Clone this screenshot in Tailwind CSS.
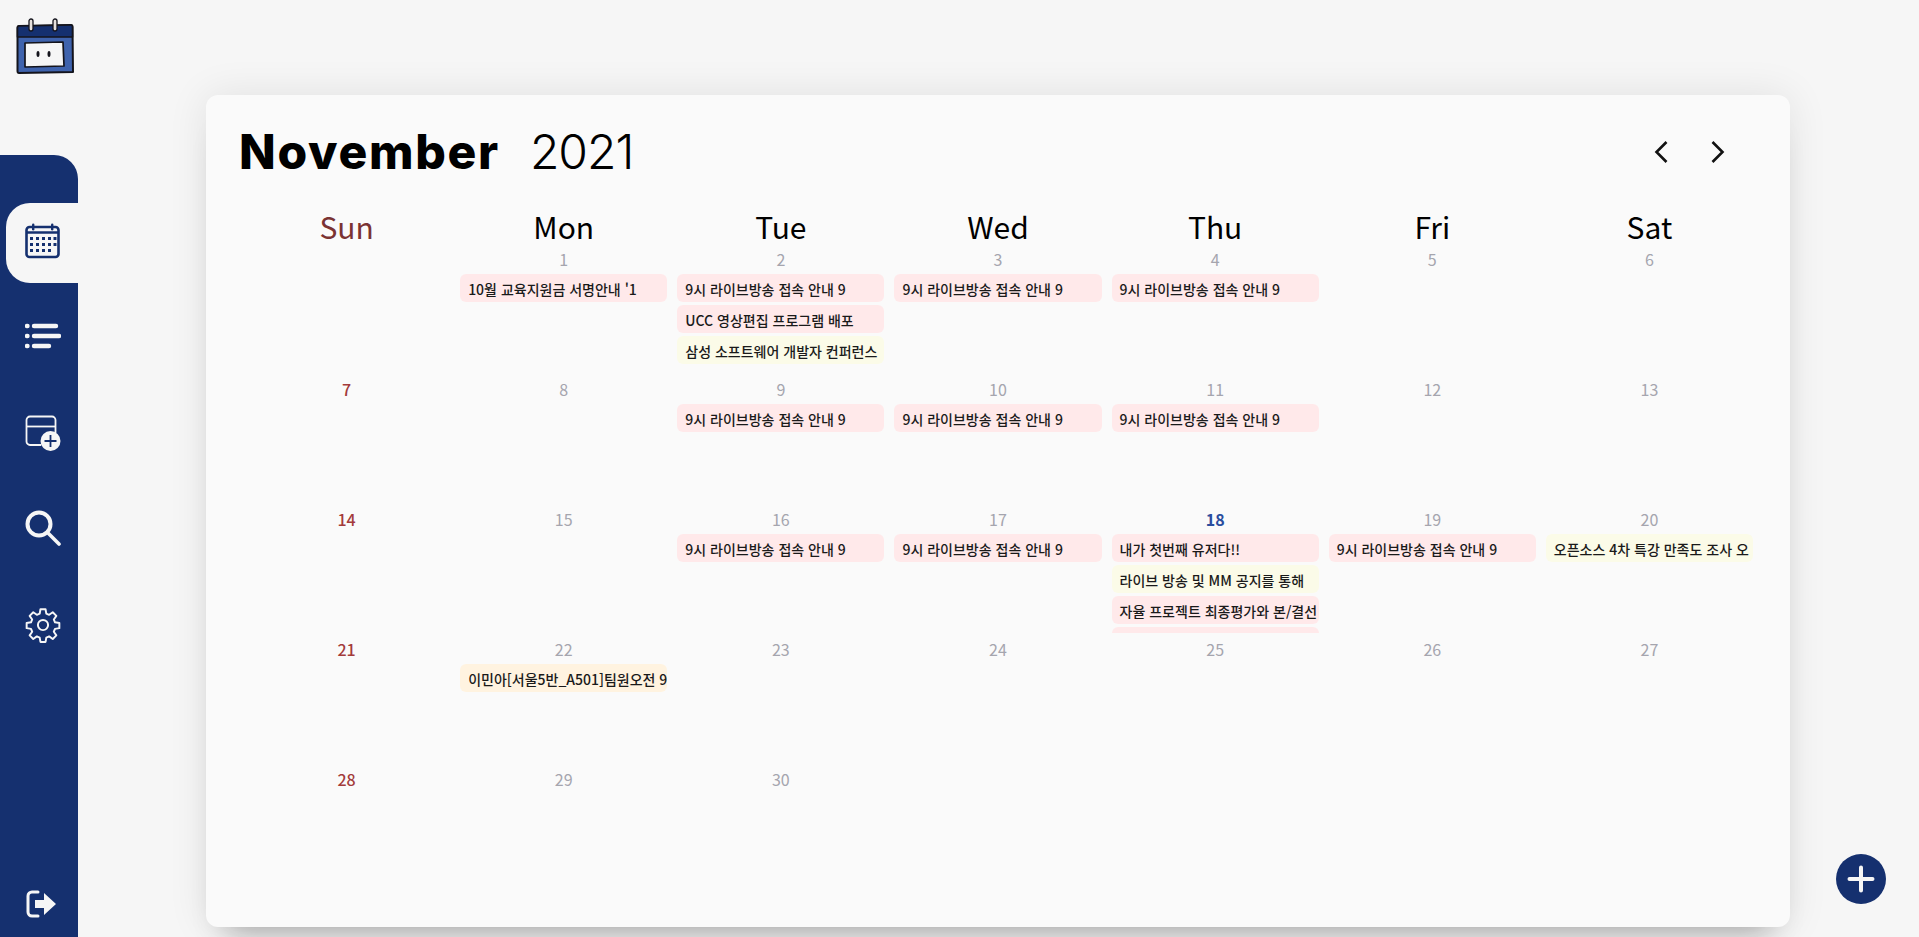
<!DOCTYPE html>
<html lang="ko">
  <head>
    <meta charset="UTF-8" />
    <meta name="viewport" content="width=device-width, initial-scale=1.0" />
    <title>Calendar</title>
    <script src="https://cdn.jsdelivr.net/npm/@tailwindcss/browser@4"></script>
  </head>
  <body class="bg-[#f6f6f6] text-black antialiased font-['Noto_Sans_CJK_KR','Noto_Sans',sans-serif]">
    <div class="relative flex h-[937px] overflow-hidden">
      <!-- SIDEBAR -->
      <aside class="flex w-[78px] shrink-0 flex-col">
        <div class="h-[155px] pl-[16px] pt-[17px]">
          <svg width="58" height="58" viewBox="0 0 58 58">
            <path d="M3 9 L55 8 Q56.500 8 56.500 10 L57 55 L3 56 Q1.500 56 1.500 54 L1.500 11 Q1.500 9 3 9 Z" fill="#3f63ad" stroke="#14141c" stroke-width="2" stroke-linejoin="round"/>
            <path d="M3 9 L55 8 Q56.500 8 56.500 10 L56.500 20 L1.500 20 L1.500 11 Q1.500 9 3 9 Z" fill="#15306f" stroke="#14141c" stroke-width="1.600" stroke-linejoin="round"/>
            <rect x="13" y="2" width="4" height="12" rx="2" fill="#e6e0dc" stroke="#14141c" stroke-width="1.300"/>
            <rect x="37" y="2" width="4" height="12" rx="2" fill="#e6e0dc" stroke="#14141c" stroke-width="1.300"/>
            <path d="M9 26 L47 25 L48 49 L9 50 Z" fill="#f6f6f6" stroke="#14141c" stroke-width="1.700" stroke-linejoin="round"/>
            <ellipse cx="22" cy="37" rx="1.500" ry="3" fill="#14141c"/>
            <ellipse cx="33" cy="37" rx="1.500" ry="3" fill="#14141c"/>
          </svg>
        </div>
        <nav class="flex flex-1 flex-col rounded-tr-[24px] bg-[#15306f] pl-[6px] pt-[48px] text-[#f6f6f6]">
          <a class="flex h-[80px] items-start rounded-l-[24px] bg-[#f6f6f6] pl-[19px] pt-[20px] text-[#15306f]">
            <svg width="36" height="36" viewBox="0 0 36 36" fill="currentColor">
              <rect x="1.500" y="4" width="32" height="30" rx="3" fill="none" stroke="currentColor" stroke-width="2.600"/>
              <path d="M1.500 9.500h32" stroke="currentColor" stroke-width="2.600"/>
              <rect x="7" y="0.500" width="2.400" height="7" rx="1.200"/>
              <rect x="26" y="0.500" width="2.400" height="7" rx="1.200"/>
              <path d="M5 14h3v3H5zM11 14h3v3h-3zM17 14h3v3h-3zM23 14h3v3h-3zM28.500 14h3v3h-3zM5 20h3v3H5zM11 20h3v3h-3zM17 20h3v3h-3zM23 20h3v3h-3zM28.500 20h3v3h-3zM5 26h3v3H5zM11 26h3v3h-3zM17 26h3v3h-3zM23 26h3v3h-3z"/>
            </svg>
          </a>
          <a class="mt-[40px] flex h-[60px] pl-[19px]">
            <svg width="36" height="30" viewBox="0 0 36 30" fill="none" stroke="currentColor" stroke-linecap="round">
              <path d="M2 3h.5M9 3h22M2 13h.5M9 13h25M2 23h.5M9 23h15" stroke-width="4.400"/>
            </svg>
          </a>
          <a class="mt-[32px] flex h-[60px] pl-[19px]">
            <svg width="36" height="36" viewBox="0 0 36 36" fill="none" stroke="currentColor">
              <path d="M16 30H5a3.500 3.500 0 0 1-3.500-3.500V5A3.500 3.500 0 0 1 5 1.500h22A3.500 3.500 0 0 1 30.500 5v13" stroke-width="1.800"/>
              <path d="M1.500 11.500h29" stroke-width="1.800"/>
              <circle cx="25.500" cy="26" r="10" fill="currentColor" stroke="none"/>
              <path d="M25.500 20v12M19.500 26h12" stroke="#15306f" stroke-width="1.800"/>
            </svg>
          </a>
          <a class="mt-[35px] flex h-[63px] pl-[19px]">
            <svg width="36" height="36" viewBox="0 0 36 36" fill="none" stroke="currentColor" stroke-width="4">
              <circle cx="14" cy="14" r="11.500"/>
              <path d="M22.500 22.500L34 34" stroke-width="3.600" stroke-linecap="round"/>
            </svg>
          </a>
          <a class="mt-[34px] flex h-[36px] pl-[19px]">
            <svg width="36" height="36" viewBox="0 0 24 24" fill="none" stroke="currentColor" stroke-width="1.300" stroke-linejoin="round">
              <path d="M10.300 1.500h3.400l.5 2.900 1.900.8 2.400-1.700 2.400 2.400-1.700 2.400.8 1.900 2.900.5v3.400l-2.900.5-.8 1.900 1.700 2.400-2.400 2.400-2.400-1.700-1.900.8-.5 2.900h-3.400l-.5-2.900-1.900-.8-2.400 1.700-2.400-2.400 1.700-2.400-.8-1.900-2.900-.5v-3.400l2.900-.5.8-1.900-1.700-2.400 2.400-2.400 2.400 1.700 1.900-.8z"/>
              <circle cx="12" cy="12" r="3.400"/>
            </svg>
          </a>
          <a class="mt-auto mb-[19px] flex pl-[20px]">
            <svg width="31" height="28" viewBox="0 0 31 28" fill="currentColor">
              <path d="M12 2H6a4 4 0 0 0-4 4v16a4 4 0 0 0 4 4h6" fill="none" stroke="currentColor" stroke-width="3" stroke-linecap="round"/>
              <path d="M9 10h9V3l12 11-12 11v-7H9z"/>
            </svg>
          </a>
        </nav>
      </aside>

      <!-- CALENDAR CARD -->
      <main class="ml-[128px] mt-[95px] h-[832px] w-[1584px] shrink-0 rounded-[12px] bg-[#fafafa] px-[32px] shadow-[0_0_40px_rgba(0,0,0,0.09),0_25px_30px_-20px_rgba(0,0,0,0.3)]">
        <header class="flex h-[112px] items-center justify-between pt-[1px]">
          <h1 class="flex items-baseline gap-[30px] pl-[1px] text-[48px] leading-none font-['Inter',sans-serif]">
            <span class="font-extrabold tracking-[1.700px]">November</span>
            <span class="font-light tracking-[-1px]">2021</span>
          </h1>
          <div class="mr-[33px] flex gap-[43px]">
            <svg width="14" height="24" viewBox="0 0 14 24" fill="none" stroke="#111" stroke-width="2.600"><path d="M12.500 2 2.500 12l10 10"/></svg>
            <svg width="14" height="24" viewBox="0 0 14 24" fill="none" stroke="#111" stroke-width="2.600"><path d="M1.500 2l10 10-10 10"/></svg>
          </div>
        </header>
        <div class="grid grid-cols-7 text-center text-[30px] leading-[38px] font-normal">
          <div class="text-[#7a3333]">Sun</div><div>Mon</div><div>Tue</div><div>Wed</div><div>Thu</div><div>Fri</div><div>Sat</div>
        </div>
        <div class="mt-[2px] grid grid-cols-7 grid-rows-[repeat(5,130px)] text-center text-[16px] leading-[24px] text-[#a5a5ae]">
          <div></div>
          <div class="h-[126px] overflow-hidden"><div>1</div>
            <p class="mx-[5px] mb-[1px] mt-[3px] h-[28px] overflow-hidden whitespace-nowrap rounded-[6px] bg-[#ffe9ea] pl-[8px] text-left text-[14px] leading-[30px] font-medium text-[#1a1a1a]">10월 교육지원금 서명안내 '1</p></div>
          <div class="h-[126px] overflow-hidden"><div>2</div>
            <p class="mx-[5px] mb-[1px] mt-[3px] h-[28px] overflow-hidden whitespace-nowrap rounded-[6px] bg-[#ffe9ea] pl-[8px] text-left text-[14px] leading-[30px] font-medium text-[#1a1a1a]">9시 라이브방송 접속 안내 9</p>
            <p class="mx-[5px] mb-[1px] mt-[3px] h-[28px] overflow-hidden whitespace-nowrap rounded-[6px] bg-[#ffe9ea] pl-[8px] text-left text-[14px] leading-[30px] font-medium text-[#1a1a1a]">UCC 영상편집 프로그램 배포</p>
            <p class="mx-[5px] mb-[1px] mt-[3px] h-[28px] overflow-hidden whitespace-nowrap rounded-[6px] bg-[#fbfbe8] pl-[8px] text-left text-[14px] leading-[30px] font-medium text-[#1a1a1a]">삼성 소프트웨어 개발자 컨퍼런스</p></div>
          <div class="h-[126px] overflow-hidden"><div>3</div>
            <p class="mx-[5px] mb-[1px] mt-[3px] h-[28px] overflow-hidden whitespace-nowrap rounded-[6px] bg-[#ffe9ea] pl-[8px] text-left text-[14px] leading-[30px] font-medium text-[#1a1a1a]">9시 라이브방송 접속 안내 9</p></div>
          <div class="h-[126px] overflow-hidden"><div>4</div>
            <p class="mx-[5px] mb-[1px] mt-[3px] h-[28px] overflow-hidden whitespace-nowrap rounded-[6px] bg-[#ffe9ea] pl-[8px] text-left text-[14px] leading-[30px] font-medium text-[#1a1a1a]">9시 라이브방송 접속 안내 9</p></div>
          <div>5</div>
          <div>6</div>

          <div class="font-medium text-[#a33b3b]">7</div>
          <div>8</div>
          <div class="h-[126px] overflow-hidden"><div>9</div>
            <p class="mx-[5px] mb-[1px] mt-[3px] h-[28px] overflow-hidden whitespace-nowrap rounded-[6px] bg-[#ffe9ea] pl-[8px] text-left text-[14px] leading-[30px] font-medium text-[#1a1a1a]">9시 라이브방송 접속 안내 9</p></div>
          <div class="h-[126px] overflow-hidden"><div>10</div>
            <p class="mx-[5px] mb-[1px] mt-[3px] h-[28px] overflow-hidden whitespace-nowrap rounded-[6px] bg-[#ffe9ea] pl-[8px] text-left text-[14px] leading-[30px] font-medium text-[#1a1a1a]">9시 라이브방송 접속 안내 9</p></div>
          <div class="h-[126px] overflow-hidden"><div>11</div>
            <p class="mx-[5px] mb-[1px] mt-[3px] h-[28px] overflow-hidden whitespace-nowrap rounded-[6px] bg-[#ffe9ea] pl-[8px] text-left text-[14px] leading-[30px] font-medium text-[#1a1a1a]">9시 라이브방송 접속 안내 9</p></div>
          <div>12</div>
          <div>13</div>

          <div class="font-medium text-[#a33b3b]">14</div>
          <div>15</div>
          <div class="h-[126px] overflow-hidden"><div>16</div>
            <p class="mx-[5px] mb-[1px] mt-[3px] h-[28px] overflow-hidden whitespace-nowrap rounded-[6px] bg-[#ffe9ea] pl-[8px] text-left text-[14px] leading-[30px] font-medium text-[#1a1a1a]">9시 라이브방송 접속 안내 9</p></div>
          <div class="h-[126px] overflow-hidden"><div>17</div>
            <p class="mx-[5px] mb-[1px] mt-[3px] h-[28px] overflow-hidden whitespace-nowrap rounded-[6px] bg-[#ffe9ea] pl-[8px] text-left text-[14px] leading-[30px] font-medium text-[#1a1a1a]">9시 라이브방송 접속 안내 9</p></div>
          <div class="h-[126px] overflow-hidden"><div class="font-bold text-[#2a4d9e]">18</div>
            <p class="mx-[5px] mb-[1px] mt-[3px] h-[28px] overflow-hidden whitespace-nowrap rounded-[6px] bg-[#ffe9ea] pl-[8px] text-left text-[14px] leading-[30px] font-medium text-[#1a1a1a]">내가 첫번째 유저다!!</p>
            <p class="mx-[5px] mb-[1px] mt-[3px] h-[28px] overflow-hidden whitespace-nowrap rounded-[6px] bg-[#fbfbe8] pl-[8px] text-left text-[14px] leading-[30px] font-medium text-[#1a1a1a]">라이브 방송 및 MM 공지를 통해</p>
            <p class="mx-[5px] mb-[1px] mt-[3px] h-[28px] overflow-hidden whitespace-nowrap rounded-[6px] bg-[#ffe9ea] pl-[8px] text-left text-[14px] leading-[30px] font-medium text-[#1a1a1a]">자율 프로젝트 최종평가와 본/결선</p>
            <p class="mx-[5px] mb-[1px] mt-[3px] h-[28px] rounded-[6px] bg-[#ffe9ea]"></p></div>
          <div class="h-[126px] overflow-hidden"><div>19</div>
            <p class="mx-[5px] mb-[1px] mt-[3px] h-[28px] overflow-hidden whitespace-nowrap rounded-[6px] bg-[#ffe9ea] pl-[8px] text-left text-[14px] leading-[30px] font-medium text-[#1a1a1a]">9시 라이브방송 접속 안내 9</p></div>
          <div class="h-[126px] overflow-hidden"><div>20</div>
            <p class="mx-[5px] mb-[1px] mt-[3px] h-[28px] overflow-hidden whitespace-nowrap rounded-[6px] bg-[#fbfbe8] pl-[8px] text-left text-[14px] leading-[30px] font-medium text-[#1a1a1a]">오픈소스 4차 특강 만족도 조사 오</p></div>

          <div class="font-medium text-[#a33b3b]">21</div>
          <div class="h-[126px] overflow-hidden"><div>22</div>
            <p class="mx-[5px] mb-[1px] mt-[3px] h-[28px] overflow-hidden whitespace-nowrap rounded-[6px] bg-[#fff3e0] pl-[8px] text-left text-[14px] leading-[30px] font-medium text-[#1a1a1a]">이민아[서울5반_A501]팀원오전 9</p></div>
          <div>23</div><div>24</div><div>25</div><div>26</div><div>27</div>

          <div class="font-medium text-[#a33b3b]">28</div>
          <div>29</div><div>30</div>
        </div>
      </main>

      <!-- ADD BUTTON -->
      <button class="absolute bottom-[33px] right-[33px] flex h-[50px] w-[50px] items-center justify-center rounded-full bg-[#15306f]">
        <svg width="28" height="28" viewBox="0 0 28 28" stroke="#f6f6f6" stroke-width="4" stroke-linecap="round"><path d="M14 2.500v23M2.500 14h23"/></svg>
      </button>
    </div>
  </body>
</html>
